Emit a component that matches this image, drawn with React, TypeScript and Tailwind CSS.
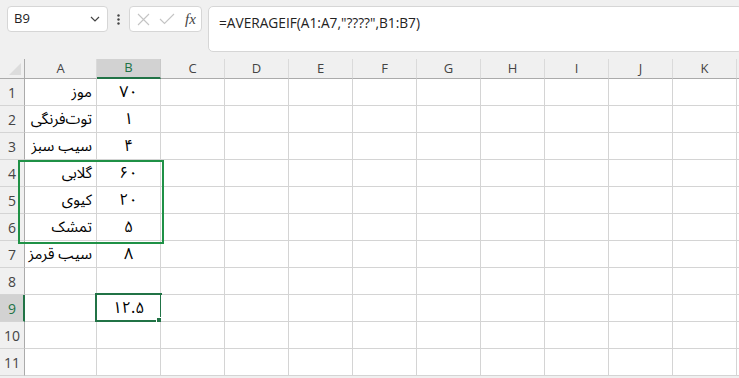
const COLS = ['A', 'B', 'C', 'D', 'E', 'F', 'G', 'H', 'I', 'J', 'K', 'L']

const data: Record<number, [string, string]> = {
  1: ['موز', '۷۰'],
  2: ['توت‌فرنگی', '۱'],
  3: ['سیب سبز', '۴'],
  4: ['گلابی', '۶۰'],
  5: ['کیوی', '۲۰'],
  6: ['تمشک', '۵'],
  7: ['سیب قرمز', '۸'],
}

const fa = "font-['Noto_Sans_Arabic','DejaVu_Sans',sans-serif]"

function colWidth(c: string) {
  return c === 'A' ? 'w-[72px]' : 'w-[64px]'
}

function FormulaBar() {
  return (
    <div className="flex h-[59px] items-start bg-[#f0f0f0] pt-[6px] pl-[7px]">
      {/* name box */}
      <div className="flex h-[26px] w-[101px] items-center justify-between rounded-[4px] border border-[#d6d6d6] bg-white pl-[6px] pr-[7px]">
        <span className="text-[13px] text-[#222]">B9</span>
        <svg width="10" height="6" viewBox="0 0 10 6" className="text-[#444]">
          <path d="M1 1l4 4 4-4" fill="none" stroke="currentColor" strokeWidth="1.2" />
        </svg>
      </div>
      <div className="flex h-[26px] w-[21px] items-center justify-center">
        <svg width="3" height="11" viewBox="0 0 3 11">
          <circle cx="1.5" cy="1.5" r="1.2" fill="#444" />
          <circle cx="1.5" cy="5.5" r="1.2" fill="#444" />
          <circle cx="1.5" cy="9.5" r="1.2" fill="#444" />
        </svg>
      </div>
      {/* cancel / enter / fx */}
      <div className="flex h-[26px] w-[73px] items-center rounded-[4px] border border-[#d6d6d6] bg-white pl-[6px]">
        <svg width="13" height="13" viewBox="0 0 13 13" className="ml-[1px]">
          <path d="M1 1l11 11M12 1L1 12" stroke="#c4c4c4" strokeWidth="1.1" fill="none" />
        </svg>
        <svg width="16" height="12" viewBox="0 0 16 12" className="ml-[9px]">
          <path d="M1 6l4.5 4.5L15 1" stroke="#c4c4c4" strokeWidth="1.1" fill="none" />
        </svg>
        <span className="ml-[10px] font-['Liberation_Serif',serif] text-[15px] italic leading-none text-[#444]">fx</span>
      </div>
      {/* formula input */}
      <div className="ml-[6px] -mr-[4px] h-[46px] flex-1 rounded-[5px] border border-[#d6d6d6] bg-white pl-[10px] pt-[3px]">
        <span className="text-[13.7px] text-[#222]">=AVERAGEIF(A1:A7,"????",B1:B7)</span>
      </div>
    </div>
  )
}

function HeaderRow() {
  return (
    <div className="flex h-[20px] bg-[#f0f0f0]">
      <div className="relative w-[25px] shrink-0 border-r border-b border-[#ababab]">
        <svg width="12" height="12" viewBox="0 0 12 12" className="absolute right-[3px] bottom-[3px]">
          <path d="M12 0v12H0z" fill="#dcdcdc" />
        </svg>
      </div>
      {COLS.map((c) =>
        c === 'B' ? (
          <div
            key={c}
            className={`${colWidth(c)} flex shrink-0 items-center justify-center border-r border-[#c8c8c8] border-b-2 border-b-[#217346] bg-[#d2d2d2] text-[13px] text-[#217346]`}
          >
            {c}
          </div>
        ) : (
          <div
            key={c}
            className={`${colWidth(c)} flex shrink-0 items-center justify-center border-r border-b border-r-[#dadada] border-b-[#ababab] text-[13px] text-[#444]`}
          >
            {c}
          </div>
        ),
      )}
    </div>
  )
}

function Row({ n }: { n: number }) {
  const sel = n === 9
  const vals = data[n]
  return (
    <div className="flex h-[27px]">
      <div
        className={
          sel
            ? 'flex w-[25px] shrink-0 items-center justify-center border-b border-b-[#d4d4d4] border-r-2 border-r-[#217346] bg-[#d2d2d2] pl-[1px] text-[14px] text-[#217346]'
            : 'flex w-[25px] shrink-0 items-center justify-center border-r border-b border-r-[#ababab] border-b-[#d4d4d4] bg-[#f0f0f0] text-[14px] text-[#444]'
        }
      >
        {n}
      </div>
      {COLS.map((c) => (
        <div
          key={c}
          className={`${colWidth(c)} relative flex shrink-0 items-center border-r border-b border-[#d4d4d4] bg-white text-[15px] leading-[20px] text-black ${fa}`}
        >
          {c === 'A' && vals && (
            <span dir="rtl" className="w-full whitespace-nowrap pr-[4px] text-right">
              {vals[0]}
            </span>
          )}
          {c === 'B' && vals && <span className="w-full text-center text-[16px]">{vals[1]}</span>}
          {c === 'B' && sel && (
            <>
              <span className="w-full text-center text-[16px]">۱۲.۵</span>
              <div className="absolute -top-[2px] -left-[2px] h-[29px] w-[67px] border-2 border-[#217346]" />
              <div className="absolute -right-[3px] -bottom-[3px] h-[6px] w-[6px] bg-[#217346] outline outline-1 outline-white" />
            </>
          )}
        </div>
      ))}
    </div>
  )
}

export default function App() {
  return (
    <div className="h-[378px] w-[739px] overflow-hidden bg-[#f0f0f0] font-['Open_Sans','Noto_Sans',sans-serif]">
      <FormulaBar />
      <div className="relative">
        <HeaderRow />
        {Array.from({ length: 11 }, (_, i) => (
          <Row key={i} n={i + 1} />
        ))}
        {/* annotation box around A4:B6 */}
        <div className="pointer-events-none absolute top-[101px] left-[18px] h-[84px] w-[146px] border-2 border-[#1f9146]" />
      </div>
    </div>
  )
}
